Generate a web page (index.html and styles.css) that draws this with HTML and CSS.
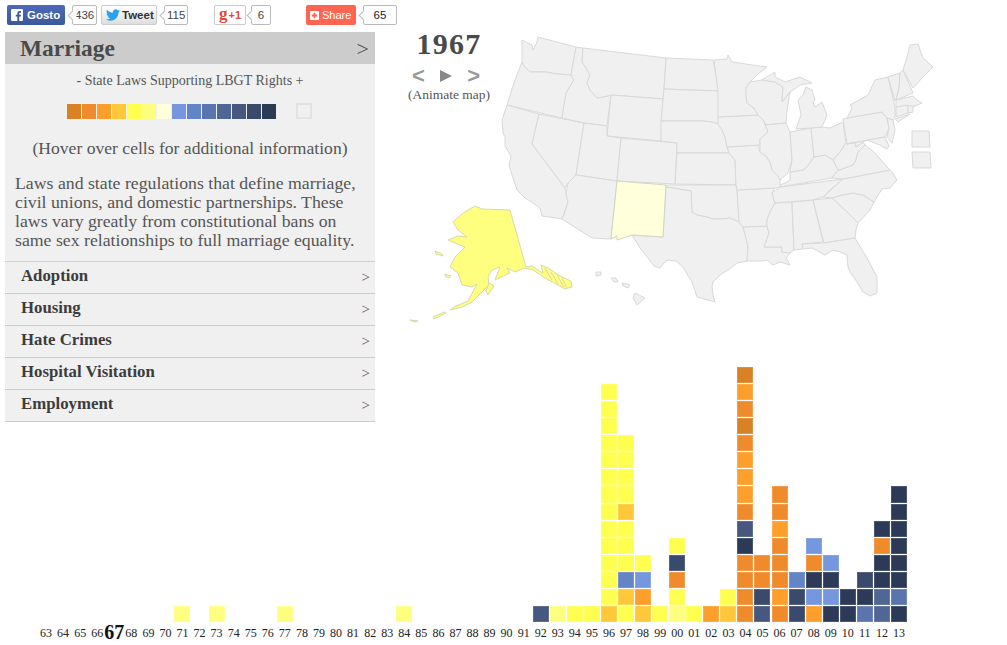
FILE: index.html
```html
<!DOCTYPE html>
<html lang="en">
<head>
<meta charset="utf-8">
<title>LGBT Rights Map</title>
<link rel="stylesheet" href="styles.css">
</head>
<body>
<div class="social">
  <div class="share-group g-fb">
    <a class="btn fb"><svg class="ico" viewBox="0 0 14 14"><rect width="14" height="14" rx="1.5" fill="#fff"/><path d="M9.6 14V8.7h1.8l.3-2.1H9.6V5.300c0-.6.2-1 1-1h1.100V2.400c-.2 0-.8-.1-1.600-.1-1.600 0-2.700 1-2.700 2.800v1.500H5.600v2.100h1.800V14z" fill="#3b5998"/></svg>Gosto</a>
    <span class="count">436</span>
  </div>
  <div class="share-group g-tw">
    <a class="btn tw"><svg class="ico bird" viewBox="0 0 24 24"><path d="M23.953 4.57a10 10 0 01-2.825.775 4.958 4.958 0 002.163-2.723c-.951.555-2.005.959-3.127 1.184a4.92 4.92 0 00-8.384 4.482C7.69 8.095 4.067 6.13 1.64 3.162a4.822 4.822 0 00-.666 2.475c0 1.71.87 3.213 2.188 4.096a4.904 4.904 0 01-2.228-.616v.06a4.923 4.923 0 003.946 4.827 4.996 4.996 0 01-2.212.085 4.936 4.936 0 004.604 3.417 9.867 9.867 0 01-6.102 2.105c-.39 0-.779-.023-1.17-.067a13.995 13.995 0 007.557 2.209c9.053 0 13.998-7.496 13.998-13.985 0-.21 0-.42-.015-.63A9.935 9.935 0 0024 4.59z" fill="#2aa3ef"/></svg>Tweet</a>
    <span class="count">115</span>
  </div>
  <div class="share-group g-gp">
    <a class="btn gp"><span class="gp-g">g</span>+1</a>
    <span class="count">6</span>
  </div>
  <div class="share-group g-sh">
    <a class="btn sh"><svg class="ico plus" viewBox="0 0 10 10"><rect width="10" height="10" rx="1" fill="#fff"/><path d="M4 2h2v2h2v2H6v2H4V6H2V4h2z" fill="#ff6550"/></svg>Share</a>
    <span class="count wide">65</span>
  </div>
</div>

<div class="layout">
  <aside class="sidebar">
    <div class="active-head"><h1>Marriage</h1><span class="chev-big">&gt;</span></div>
    <div class="panel">
      <p class="scale-title">- State Laws Supporting LBGT Rights +</p>
      <div class="legend">
        <i class="swatch c1"></i><i class="swatch c2"></i><i class="swatch c3"></i><i class="swatch c4"></i><i class="swatch c5"></i><i class="swatch c6"></i><i class="swatch c7"></i><i class="swatch c8"></i><i class="swatch c9"></i><i class="swatch c10"></i><i class="swatch c11"></i><i class="swatch c12"></i><i class="swatch c13"></i><i class="swatch c14"></i>
        <i class="swatch-empty"></i>
      </div>
      <p class="hint">(Hover over cells for additional information)</p>
      <p class="desc">Laws and state regulations that define marriage,<br>civil unions, and domestic partnerships. These<br>laws vary greatly from constitutional bans on<br>same sex relationships to full marriage equality.</p>
    </div>
    <ul class="topics">
      <li><span>Adoption</span><span class="chev">&gt;</span></li>
      <li><span>Housing</span><span class="chev">&gt;</span></li>
      <li><span>Hate Crimes</span><span class="chev">&gt;</span></li>
      <li><span>Hospital Visitation</span><span class="chev">&gt;</span></li>
      <li><span>Employment</span><span class="chev">&gt;</span></li>
    </ul>
  </aside>

  <section class="stage">
    <svg class="map" viewBox="400 32 540 310" width="540" height="310">
      <g class="state">
        <path d="M538 37L576 47L571 75L557 74L546 72L536 72L530 72L526 68L524 66L522 62L522 40L528 43L532 45L533 50L535 46L537 42Z"/>
        <path d="M522 62L524 66L526 68L530 72L546 72L557 74L571 75L574 80L566 93L562 118L507 105L511 92L515 80Z"/>
        <path d="M507 105L539 114L532 144L565 188L568 202L562 219L542 216L540 208L533 203L525 198L517 190L513 178L509 165L511 156L505 146L505 137L503 133L502 120Z"/>
        <path d="M539 114L584 123L576 175L568 183L565 188L532 144Z"/>
        <path d="M576 47L583 48L582 62L586 68L590 75L587 83L590 90L597 98L603 97L611 95L607 126L584 123L562 118L566 93L574 80L571 75Z"/>
        <path d="M583 48L666 58L664 89L663 99L612 95L603 97L597 98L590 90L587 83L590 75L586 68L582 62Z"/>
        <path d="M611 95L663 99L661 141L607 136Z"/>
        <path d="M584 123L607 126L607 136L621 138L617 181L576 175Z"/>
        <path d="M621 138L677 143L675 184L617 181Z"/>
        <path d="M576 175L617 181L611 239L592 238L562 219L565 212L568 202L566 194L568 183Z"/>
        <path d="M666 58L713 60L716 75L718 91L664 89Z"/>
        <path d="M664 89L718 91L720 117L718 124L712 122L703 121L661 121Z"/>
        <path d="M661 121L703 121L712 122L718 124L722 130L725 137L727 147L729 153L677 153L677 143L661 141Z"/>
        <path d="M677 153L729 153L735 160L736 185L675 184Z"/>
        <path d="M666 185L736 185L737 190L739 222L730 218L723 219L713 219L707 217L697 215L692 212L691 191L666 187Z"/>
        <path d="M666 187L691 191L692 212L697 215L707 217L713 219L723 219L730 218L739 222L743 227L746 238L748 248L747 261L737 263L728 270L720 275L713 282L712 287L713 295L715 302L697 297L692 282L683 267L676 261L668 260L664 263L660 268L654 266L648 258L640 248L632 235L663 237Z"/>
        <path d="M743 227L767 226L769 233L764 247L782 247L782 252L790 253L786 258L790 265L780 262L773 265L767 260L762 261L747 261L748 248L746 238Z"/>
        <path d="M737 190L775 188L772 193L775 203L770 212L767 220L767 226L743 227L739 222Z"/>
        <path d="M775 203L792 202L794 250L790 253L782 252L782 247L764 247L769 233L767 226L767 220L770 212Z"/>
        <path d="M792 202L813 200L823 242L802 244L803 249L795 250L794 250Z"/>
        <path d="M813 200L832 198L845 210L858 223L856 230L855 238L824 243Z"/>
        <path d="M802 244L824 243L855 238L861 248L867 258L877 277L877 293L870 296L863 292L857 282L850 272L848 267L847 255L840 252L833 250L825 255L812 248L803 249Z"/>
        <path d="M832 198L842 195L853 193L863 195L874 202L870 210L858 223L845 210Z"/>
        <path d="M843 179L890 170L892 172L897 180L890 188L882 189L874 202L863 195L853 193L842 195L832 198L823 197Z"/>
        <path d="M780 187L843 179L830 190L823 197L813 200L775 203L772 193Z"/>
        <path d="M780 185L785 183L790 180L790 172L803 170L807 167L813 157L825 155L833 160L838 170L832 178L780 187Z"/>
        <path d="M727 147L758 145L760 152L766 156L770 162L772 170L778 176L780 180L780 187L775 188L737 190L736 185L735 160L729 153Z"/>
        <path d="M718 117L758 115L764 121L768 132L760 139L760 145L727 147L725 137L722 130L718 124Z"/>
        <path d="M714 60L727 59L728 55L732 62L740 63L752 65L767 67L758 74L750 82L746 88L746 95L747 103L754 108L758 115L718 117L718 91L716 75Z"/>
        <path d="M750 82L762 80L775 82L783 87L782 102L790 92L787 110L786 123L765 125L764 121L758 115L754 108L747 103L746 95L746 88Z"/>
        <path d="M765 125L786 123L790 132L792 160L788 173L780 180L778 176L772 170L770 162L766 156L760 152L760 139L768 132L764 121Z"/>
        <path d="M790 132L811 128L814 157L807 167L803 170L790 172L792 160Z"/>
        <path d="M811 128L822 127L830 128L843 122L846 143L840 152L833 160L825 155L814 157Z"/>
        <path d="M796 129L801 115L798 100L803 95L806 87L812 90L815 100L813 102L815 107L822 102L827 115L822 127L811 128Z"/>
        <path d="M762 80L775 72L775 77L785 82L800 77L812 83L800 85L790 92L782 102L783 87L775 82Z"/>
        <path d="M846 143L855 142L856 147L863 142L865 145L858 152L856 160L853 165L840 170L838 170L833 160L840 152Z"/>
        <path d="M832 178L838 170L840 170L853 165L856 160L858 152L865 145L875 153L887 167L890 170L843 179Z"/>
        <path d="M843 119L847 118L882 112L887 118L889 128L885 137L847 144Z"/>
        <path d="M847 118L852 108L850 105L868 95L875 80L888 77L895 107L895 117L893 120L887 118L882 112Z"/>
        <path d="M887 118L893 120L895 130L892 143L887 137L889 128Z"/>
        <path d="M847 144L885 137L889 146L887 149L883 147L880 145L867 140L863 142L856 147L855 142Z"/>
        <path d="M888 77L900 73L899 88L896 100L895 101Z"/>
        <path d="M900 73L903 70L913 93L896 100L899 88Z"/>
        <path d="M896 100L913 96L917 100L922 103L913 107L896 107Z"/>
        <path d="M896 107L908 105L908 113L896 117Z"/>
        <path d="M908 106L913 106L913 112L908 113Z"/>
        <path d="M903 70L907 57L910 45L918 44L923 58L933 67L923 77L913 88Z"/>
        <path d="M895 119L910 114L898 122Z"/>
        <path d="M912 131L929 131L930 147L912 147Z"/>
        <path d="M912 152L930 152L931 168L913 168Z"/>
        <path d="M635 293L645 298L637 305L633 298Z"/>
        <path d="M622 283L630 285L628 288L623 286Z"/>
        <path d="M611 278L616 278L618 282L614 282Z"/>
        <path d="M596 272L601 272L601 275L596 276Z"/>
      </g>
      <path class="state-low" d="M475 206L482 209L510 210L526 267L532 266L541 272L543 273L541 265L548 268L560 276L571 281L572 287L565 289L556 284L545 278L533 270L525 268L515 272L507 268L510 273L495 280L500 267L492 270L488 277L489 285L472 302L462 307L450 310L454 307L468 301L477 284L472 287L462 285L458 273L450 267L455 257L465 247L455 243L448 240L458 236L467 237L458 230L453 222L463 213Z"/>
      <path class="state-low" d="M435 251L442 254L443 256L436 254ZM445 274L451 276L449 278L445 276ZM489 283L494 286L488 295L486 291ZM433 317L444 312L446 313L434 319ZM410 320L418 321L414 322Z"/>
      <path class="panhandle" d="M545 268L552 280M551 272L558 284M557 275L564 287M562 278L567 288"/>
      <path class="state-new" d="M617 181L666 185L663 237L632 235L617 240L617 236L611 239Z"/>
    </svg>
    <div class="player">
      <div class="year">1967</div>
      <div class="controls"><span class="arrow">&lt;</span><svg class="play" viewBox="0 0 12 12" width="12" height="12"><path d="M0 0L12 6L0 12Z" fill="#888"/></svg><span class="arrow">&gt;</span></div>
      <div class="animate">(Animate map)</div>
    </div>
  </section>

  <section class="chart">
    <div class="col"><div class="stack"></div><span class="yr">63</span></div>
    <div class="col"><div class="stack"></div><span class="yr">64</span></div>
    <div class="col"><div class="stack"></div><span class="yr">65</span></div>
    <div class="col"><div class="stack"></div><span class="yr">66</span></div>
    <div class="col"><div class="stack"></div><span class="yr now">67</span></div>
    <div class="col"><div class="stack"></div><span class="yr">68</span></div>
    <div class="col"><div class="stack"></div><span class="yr">69</span></div>
    <div class="col"><div class="stack"></div><span class="yr">70</span></div>
    <div class="col"><div class="stack"><i class="cell c6"></i></div><span class="yr">71</span></div>
    <div class="col"><div class="stack"></div><span class="yr">72</span></div>
    <div class="col"><div class="stack"><i class="cell c6"></i></div><span class="yr">73</span></div>
    <div class="col"><div class="stack"></div><span class="yr">74</span></div>
    <div class="col"><div class="stack"></div><span class="yr">75</span></div>
    <div class="col"><div class="stack"></div><span class="yr">76</span></div>
    <div class="col"><div class="stack"><i class="cell c6"></i></div><span class="yr">77</span></div>
    <div class="col"><div class="stack"></div><span class="yr">78</span></div>
    <div class="col"><div class="stack"></div><span class="yr">79</span></div>
    <div class="col"><div class="stack"></div><span class="yr">80</span></div>
    <div class="col"><div class="stack"></div><span class="yr">81</span></div>
    <div class="col"><div class="stack"></div><span class="yr">82</span></div>
    <div class="col"><div class="stack"></div><span class="yr">83</span></div>
    <div class="col"><div class="stack"><i class="cell c6"></i></div><span class="yr">84</span></div>
    <div class="col"><div class="stack"></div><span class="yr">85</span></div>
    <div class="col"><div class="stack"></div><span class="yr">86</span></div>
    <div class="col"><div class="stack"></div><span class="yr">87</span></div>
    <div class="col"><div class="stack"></div><span class="yr">88</span></div>
    <div class="col"><div class="stack"></div><span class="yr">89</span></div>
    <div class="col"><div class="stack"></div><span class="yr">90</span></div>
    <div class="col"><div class="stack"></div><span class="yr">91</span></div>
    <div class="col"><div class="stack"><i class="cell c12"></i></div><span class="yr">92</span></div>
    <div class="col"><div class="stack"><i class="cell c6"></i></div><span class="yr">93</span></div>
    <div class="col"><div class="stack"><i class="cell c5"></i></div><span class="yr">94</span></div>
    <div class="col"><div class="stack"><i class="cell c5"></i></div><span class="yr">95</span></div>
    <div class="col"><div class="stack"><i class="cell c4"></i><i class="cell c5"></i><i class="cell c5"></i><i class="cell c5"></i><i class="cell c5"></i><i class="cell c5"></i><i class="cell c5"></i><i class="cell c5"></i><i class="cell c5"></i><i class="cell c5"></i><i class="cell c5"></i><i class="cell c5"></i><i class="cell c5"></i><i class="cell c5"></i></div><span class="yr">96</span></div>
    <div class="col"><div class="stack"><i class="cell c5"></i><i class="cell c4"></i><i class="cell c9"></i><i class="cell c5"></i><i class="cell c5"></i><i class="cell c5"></i><i class="cell c4"></i><i class="cell c5"></i><i class="cell c5"></i><i class="cell c5"></i><i class="cell c5"></i></div><span class="yr">97</span></div>
    <div class="col"><div class="stack"><i class="cell c4"></i><i class="cell c3"></i><i class="cell c8"></i><i class="cell c5"></i></div><span class="yr">98</span></div>
    <div class="col"><div class="stack"><i class="cell c5"></i></div><span class="yr">99</span></div>
    <div class="col"><div class="stack"><i class="cell c6"></i><i class="cell c5"></i><i class="cell c2"></i><i class="cell c13"></i><i class="cell c5"></i></div><span class="yr">00</span></div>
    <div class="col"><div class="stack"><i class="cell c5"></i></div><span class="yr">01</span></div>
    <div class="col"><div class="stack"><i class="cell c3"></i></div><span class="yr">02</span></div>
    <div class="col"><div class="stack"><i class="cell c4"></i><i class="cell c5"></i></div><span class="yr">03</span></div>
    <div class="col"><div class="stack"><i class="cell c2"></i><i class="cell c2"></i><i class="cell c2"></i><i class="cell c2"></i><i class="cell c14"></i><i class="cell c12"></i><i class="cell c2"></i><i class="cell c3"></i><i class="cell c3"></i><i class="cell c3"></i><i class="cell c2"></i><i class="cell c1"></i><i class="cell c2"></i><i class="cell c3"></i><i class="cell c1"></i></div><span class="yr">04</span></div>
    <div class="col"><div class="stack"><i class="cell c12"></i><i class="cell c13"></i><i class="cell c2"></i><i class="cell c2"></i></div><span class="yr">05</span></div>
    <div class="col"><div class="stack"><i class="cell c2"></i><i class="cell c3"></i><i class="cell c2"></i><i class="cell c2"></i><i class="cell c2"></i><i class="cell c3"></i><i class="cell c2"></i><i class="cell c2"></i></div><span class="yr">06</span></div>
    <div class="col"><div class="stack"><i class="cell c13"></i><i class="cell c13"></i><i class="cell c9"></i></div><span class="yr">07</span></div>
    <div class="col"><div class="stack"><i class="cell c3"></i><i class="cell c8"></i><i class="cell c14"></i><i class="cell c2"></i><i class="cell c8"></i></div><span class="yr">08</span></div>
    <div class="col"><div class="stack"><i class="cell c14"></i><i class="cell c8"></i><i class="cell c14"></i><i class="cell c8"></i></div><span class="yr">09</span></div>
    <div class="col"><div class="stack"><i class="cell c14"></i><i class="cell c14"></i></div><span class="yr">10</span></div>
    <div class="col"><div class="stack"><i class="cell c10"></i><i class="cell c14"></i><i class="cell c13"></i></div><span class="yr">11</span></div>
    <div class="col"><div class="stack"><i class="cell c11"></i><i class="cell c11"></i><i class="cell c14"></i><i class="cell c14"></i><i class="cell c2"></i><i class="cell c14"></i></div><span class="yr">12</span></div>
    <div class="col"><div class="stack"><i class="cell c14"></i><i class="cell c10"></i><i class="cell c14"></i><i class="cell c14"></i><i class="cell c14"></i><i class="cell c14"></i><i class="cell c14"></i><i class="cell c14"></i></div><span class="yr">13</span></div>
  </section>
</div>
</body>
</html>
```
FILE: styles.css
```css
* { box-sizing: border-box; }
html, body { margin: 0; padding: 0; height: 645px; overflow: hidden; background: #fff; }
body { font-family: "Liberation Serif", serif; color: #555; }

/* share bar */
.social { display: flex; align-items: center; height: 32px; padding: 5px 0 7px 7px; font-family: "Liberation Sans", sans-serif; }
.share-group { display: flex; align-items: center; gap: 7px; }
.g-fb { width: 94px; }
.g-tw { width: 113px; }
.g-gp { width: 92px; }
.btn { display: flex; align-items: center; height: 20px; border-radius: 2px; font-size: 11.5px; font-weight: bold; }
.fb { width: 58px; padding-left: 4px; gap: 4px; background: linear-gradient(#4c69ba, #3b5998); color: #fff; }
.tw { width: 56px; padding-left: 4px; gap: 2px; background: linear-gradient(#fff, #dedede); border: 1px solid #ccc; color: #333; }
.gp { width: 32px; justify-content: center; background: #fff; border: 1px solid #ccc; color: #dd4b39; font-size: 11px; }
.gp-g { font-family: "Liberation Serif", serif; font-size: 17px; margin: -3px 1px 0 0; }
.sh { width: 50px; padding-left: 4px; gap: 3px; background: #ff6550; color: #fff; font-weight: normal; font-size: 11px; }
.ico { width: 12px; height: 12px; flex: none; }
.bird { width: 14px; height: 14px; }
.plus { width: 9px; height: 9px; }
.count { position: relative; display: flex; align-items: center; justify-content: center; height: 20px; min-width: 20px; padding: 0 2px; background: #fff; border: 1px solid #bbb; border-radius: 2px; font-size: 11.5px; color: #444; }
.count::before { content: ""; position: absolute; left: -4px; top: 6px; width: 6px; height: 6px; background: #fff; border-left: 1px solid #bbb; border-bottom: 1px solid #bbb; transform: rotate(45deg); }
.wide { width: 34px; color: #222; }
.g-gp .count { margin-left: -2px; }

/* page grid */
.layout { display: grid; grid-template-columns: 370px 1fr; grid-template-rows: 335px auto; padding-left: 5px; }

/* sidebar */
.sidebar { grid-column: 1; grid-row: 1 / 3; align-self: start; position: relative; z-index: 1; }
.active-head { display: flex; align-items: center; justify-content: space-between; height: 32px; padding: 0 6px 0 15px; background: #ccc; }
.active-head h1 { margin: 0; font-size: 23.4px; font-weight: bold; color: #4a4a4a; }
.chev-big { font-size: 22px; color: #555; padding-top: 2px; }
.panel { height: 198px; background: #f0f0f0; border-bottom: 1px solid #d0d0d0; padding-top: 8px; text-align: center; }
.scale-title { margin: 0; font-size: 14px; line-height: 18px; }
.legend { display: flex; align-items: center; gap: 1px; margin: 13px 0 0 62px; height: 16px; }
.swatch { width: 14px; height: 15px; }
.swatch-empty { width: 16px; height: 16px; margin-left: 19px; background: #f0f0f0; border: 2px solid #e2e2e2; }
.hint { margin: 19px 0 0; font-size: 17.6px; line-height: 20px; }
.desc { margin: 16px 0 0; padding-left: 10px; font-size: 17.75px; line-height: 19px; text-align: left; white-space: nowrap; }
.topics { list-style: none; margin: 0; padding: 0; }
.topics li { display: flex; align-items: center; justify-content: space-between; height: 32px; padding: 0 5px 4px 16px; background: #f0f0f0; border-bottom: 1px solid #ccc; font-size: 16.8px; font-weight: bold; color: #3c3c3c; }
.chev { font-weight: normal; font-size: 15px; color: #555; padding-top: 4px; }

/* map */
.stage { grid-column: 2; grid-row: 1; position: relative; }
.map { display: block; margin-left: 25px; }
.state { fill: #f0f0f0; stroke: #d9d9d9; stroke-width: 1; stroke-linejoin: round; }
.state-low { fill: #ffff7f; stroke: #d8d8b0; stroke-width: 1; stroke-linejoin: round; }
.panhandle { fill: none; stroke: #d8d8b0; stroke-width: 1; }
.state-new { fill: #ffffdc; stroke: #d4d4c4; stroke-width: 1; stroke-linejoin: round; }
.player { position: absolute; left: 29px; top: -2px; width: 90px; text-align: center; }
.year { font-size: 30px; line-height: 28px; font-weight: bold; color: #4a4a4a; letter-spacing: 1.2px; }
.controls { display: flex; align-items: center; justify-content: space-between; margin: 7px 14px 0 8px; height: 22px; }
.arrow { font-size: 22px; line-height: 22px; font-weight: bold; color: #999; font-family: "Liberation Sans", sans-serif; }
.play { flex: none; }
.animate { font-size: 13.5px; line-height: 16px; margin-top: 0; }

/* histogram */
.chart { grid-column: 1 / 3; grid-row: 2; display: grid; grid-template-columns: repeat(51, minmax(0, 1fr)); align-items: end; width: 870px; margin-left: 33px; }
.col { display: flex; flex-direction: column; }
.stack { display: flex; flex-direction: column-reverse; gap: 1px; }
.cell { display: block; width: 16px; height: 16.07px; box-shadow: inset 0 0 0 1px rgba(255, 255, 255, .14); }
.yr { display: flex; align-items: flex-end; justify-content: center; height: 18px; padding-right: 1px; font-size: 12px; line-height: 13px; color: #222; white-space: nowrap; }
.now { font-size: 20px; font-weight: bold; color: #111; line-height: 16px; }

/* value palette */
.c1 { background: #db8125; }
.c2 { background: #f08b2b; }
.c3 { background: #ff9f2b; }
.c4 { background: #ffc83a; }
.c5 { background: #ffff4f; }
.c6 { background: #ffff7f; }
.c7 { background: #ffffdc; }
.c8 { background: #7497e0; }
.c9 { background: #6484c8; }
.c10 { background: #5a75ad; }
.c11 { background: #506694; }
.c12 { background: #46587f; }
.c13 { background: #3a4a6c; }
.c14 { background: #2d3a57; }
```
